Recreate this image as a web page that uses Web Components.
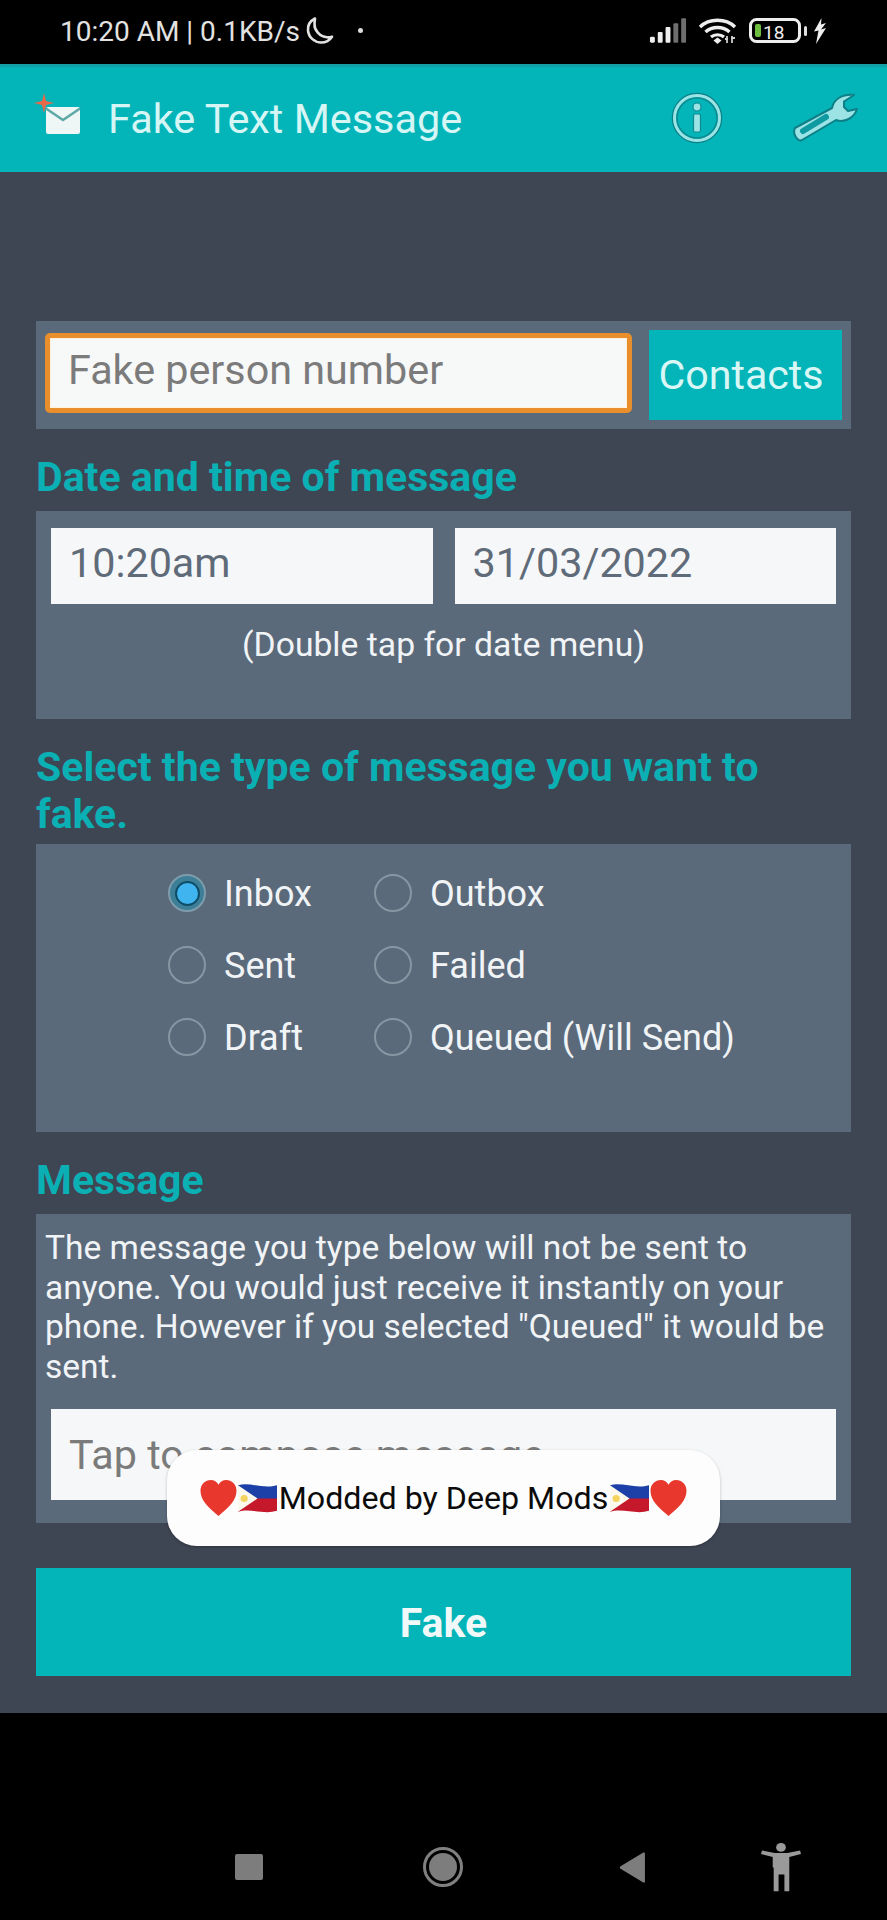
<!DOCTYPE html>
<html>
<head>
<meta charset="utf-8">
<style>
html,body{margin:0;padding:0;background:#000}
body{position:relative;width:887px;height:1920px;overflow:hidden;font-family:Roboto,"Liberation Sans",sans-serif}
</style>
</head>
<body>
<status-bar>10:20 AM | 0.1KB/s</status-bar>
<app-bar>Fake Text Message</app-bar>
<main-area>
  <contact-panel>
    <text-box focused placeholder>Fake person number</text-box>
    <teal-button>Contacts</teal-button>
  </contact-panel>
  <section-title>Date and time of message</section-title>
  <date-panel>
    <text-box slot="fields">10:20am</text-box>
    <text-box slot="fields">31/03/2022</text-box>
    (Double tap for date menu)
  </date-panel>
  <section-title style="--after:6px">Select the type of message you want to fake.</section-title>
  <type-panel>
    <radio-option checked>Inbox</radio-option>
    <radio-option>Outbox</radio-option>
    <radio-option>Sent</radio-option>
    <radio-option>Failed</radio-option>
    <radio-option>Draft</radio-option>
    <radio-option>Queued (Will Send)</radio-option>
  </type-panel>
  <section-title>Message</section-title>
  <compose-panel>
    The message you type below will not be sent to anyone. You would just receive it instantly on your phone. However if you selected "Queued" it would be sent.
    <text-box slot="field" tall placeholder>Tap to compose message</text-box>
  </compose-panel>
  <fake-button>Fake</fake-button>
</main-area>
<nav-bar></nav-bar>
<toast-note>Modded by Deep Mods</toast-note>
<script>
const define = (name, html) => {
  customElements.define(name, class extends HTMLElement {
    constructor() {
      super();
      this.attachShadow({ mode: "open" }).innerHTML = html;
    }
  });
};

const heart = `<svg width="37" height="37" viewBox="0 0 37 38"><path d="M18.500 37C8 28 0 21 0 11 0 4.500 5 0 10.500 0c3.500 0 6.500 2 8 5 1.500-3 4.500-5 8-5C32 0 37 4.500 37 11c0 10-8 17-18.500 26z" fill="#e8372c"/></svg>`;
const flag = `<svg class="flag" width="39" height="35" viewBox="0 0 38 32"><path d="M0 3c12-3 25 4 38 0v14H0z" fill="#1d3fa8"/><path d="M0 16h38v12c-13 4-26-3-38 1z" fill="#c5182b"/><path d="M0 3l19 13L0 29z" fill="#fbf8ee"/><circle cx="6" cy="16" r="3.500" fill="#f4d35e"/></svg>`;

define("status-bar", `
<style>
:host{display:flex;align-items:center;height:64px;padding:0 60px;box-sizing:border-box;background:#000;color:#e2e2e2;font-size:28px}
.text{white-space:nowrap;margin-top:-2px}
.moon{margin-left:3px;flex:none}
.dot{width:5px;height:5px;border-radius:50%;background:#ddd;margin-left:21px;flex:none;margin-top:-4px}
.right{margin-left:auto;display:flex;align-items:center;margin-top:-3px}
svg{display:block;flex:none}
</style>
<span class="text"><slot></slot></span>
<svg class="moon" width="34" height="32" viewBox="0 0 32 32" fill="none" style="margin-top:-3px"><path d="M11 3.500C6.200 6 3.500 10.500 4 15.500c.7 7 6.600 12 13.200 12 4.600 0 8.500-2.300 10.800-5.800-1.600.6-3.200.8-5 .6C15.500 21.500 10.200 15 10.500 9c.1-2 .2-3.700.5-5.500z" stroke="#e2e2e2" stroke-width="2.600" stroke-linejoin="round"/></svg>
<span class="dot"></span>
<span class="right">
  <svg width="39" height="26" viewBox="0 0 40 26" style="margin-right:10px">
    <rect x="1" y="19" width="5" height="6" rx="1.500" fill="#eee"/>
    <rect x="9" y="14" width="5" height="11" rx="1" fill="#eee"/>
    <rect x="17" y="9" width="5" height="16" rx="1" fill="#eee"/>
    <rect x="25" y="5" width="5" height="20" rx="1" fill="#6e6e6e"/>
    <rect x="33" y="0" width="5" height="25" rx="1" fill="#6e6e6e"/>
  </svg>
  <svg width="40" height="28" viewBox="0 0 40 28" fill="none" style="margin-right:11px">
    <path d="M2 10C11 1 28 1 37 10" stroke="#eee" stroke-width="3.400"/>
    <path d="M7.500 15C14 9 25 9 31.500 15" stroke="#eee" stroke-width="3.400"/>
    <path d="M13 20c3.500-3 9.500-3 13 0" stroke="#eee" stroke-width="3.200"/>
    <path d="M15.500 23.500l4-3 4 3-4 3.500z" fill="#eee"/>
    <path d="M29 19v7M27 22h3M34 19v7h0M33 21h4" stroke="#ccc" stroke-width="1.800"/>
  </svg>
  <svg width="58" height="26" viewBox="0 0 58 26" fill="none" style="margin-right:6px">
    <rect x="1.500" y="1.500" width="49" height="22" rx="6" stroke="#eee" stroke-width="3"/>
    <rect x="6" y="6" width="6" height="13" rx="2" fill="#6fbf3f"/>
    <rect x="55" y="8" width="3" height="10" rx="1.500" fill="#ddd"/>
    <text x="14" y="20.500" font-family="Roboto,sans-serif" font-size="19" fill="#eee">18</text>
  </svg>
  <svg width="14" height="26" viewBox="0 0 14 26"><path d="M8.500 0L1 13.500l4.500-1L3 26l10-16-5 1.500 5-6.500-5 1.500z" fill="#eee"/></svg>
</span>`);

define("app-bar", `
<style>
:host{display:flex;align-items:center;height:108px;background:#03b4b9;color:#d5f6f4;font-size:41.400px;box-shadow:inset 0 3px 0 #12a0a6}
.mail{margin-left:34px;margin-right:21px;flex:none;margin-top:-4px}
.title{margin-top:2px}
.info{margin-left:auto;flex:none}
.tool{margin-left:69px;margin-right:29px;flex:none}
</style>
<svg class="mail" width="53" height="46" viewBox="0 0 53 46">
  <path d="M10 0l2 8 8 2-8 2-2 8-2-8-8-2 8-2z" fill="#e8694a"/>
  <rect x="12" y="14" width="34" height="27" rx="2" fill="#eef6f6"/>
  <path d="M12 15.500L29 27l17-11.500" fill="none" stroke="#5ca9a6" stroke-width="2.500"/>
</svg>
<span class="title"><slot></slot></span>
<svg class="info" width="52" height="52" viewBox="0 0 52 52" fill="none">
  <circle cx="26" cy="26" r="24.500" stroke="#0e7f86" stroke-width="1.500"/>
  <circle cx="26" cy="26" r="22.500" stroke="#9be3e4" stroke-width="3"/>
  <circle cx="26" cy="26" r="20" stroke="#0e8a90" stroke-width="1.500"/>
  <rect x="22.500" y="22" width="7" height="18" rx="1.500" fill="#9be3e4" stroke="#0e8a90" stroke-width="1.200"/>
  <circle cx="26" cy="15" r="4" fill="#9be3e4" stroke="#0e8a90" stroke-width="1.200"/>
</svg>
<svg class="tool" width="66" height="50" viewBox="0 0 66 50" fill="none">
  <path d="M3 35L40 15C42 6 50 1 62 2L52 8.500 52 14 56 18 65 16C62 25 53 30 44 27L10 47C6 49 0 41 3 35z" fill="#9be3e4" stroke="#0e7f86" stroke-width="2" stroke-linejoin="round"/>
  <path d="M11 38L34 24" stroke="#0e9aa0" stroke-width="6" stroke-linecap="round"/>
</svg>`);

define("main-area", `
<style>
:host{display:flex;flex-direction:column;height:1541px;box-sizing:border-box;padding:149px 36px 36px;background:#3e4553}
</style>
<slot></slot>`);

define("contact-panel", `
<style>
:host{display:flex;align-items:flex-start;height:108px;box-sizing:border-box;padding:9px 9px 9px;background:#5b6a7b}
::slotted(text-box){width:587px;margin-right:17px;margin-top:3px}
</style>
<slot></slot>`);

define("date-panel", `
<style>
:host{display:block;height:208px;box-sizing:border-box;padding:17px 15px 0;background:#5b6a7b;color:#f1f4f6;font-size:33.700px;text-align:center}
.fields{display:grid;grid-template-columns:1fr 1fr;gap:22px;margin-bottom:20px}
.hint{line-height:42px}
</style>
<div class="fields"><slot name="fields"></slot></div>
<div class="hint"><slot></slot></div>`);

define("type-panel", `
<style>
:host{display:grid;grid-template-columns:206px 1fr;grid-auto-rows:72px;height:288px;box-sizing:border-box;padding:13px 0 0 132px;background:#5b6a7b}
</style>
<slot></slot>`);

define("compose-panel", `
<style>
:host{display:block;height:309px;box-sizing:border-box;padding:14px 15px 0;background:#5b6a7b;color:#f1f4f6;font-size:33.500px}
.note{line-height:39.700px;margin:0 0 22px -6px}
</style>
<div class="note"><slot></slot></div>
<slot name="field"></slot>`);

define("section-title", `
<style>
:host{display:block;box-sizing:border-box;padding:25px 0 var(--after,10px);color:#0bb0b4;font-weight:700;font-size:41px;line-height:47px}
</style>
<slot></slot>`);

define("text-box", `
<style>
:host{display:block;box-sizing:border-box;height:76px;background:#f6f7f8;color:#5f6b78;font-size:41.300px;line-height:71px;padding-left:18px;white-space:nowrap;overflow:hidden;text-align:left}
:host([placeholder]){color:#7b7b7b}
:host([focused]){height:80px;border:5px solid #e88e2c;border-radius:5px;padding-left:18px;line-height:64px;background:#f7f8f8;box-shadow:inset 0 0 0 1px #fff1dc}
:host([tall]){height:91px;line-height:92px}
</style>
<slot></slot>`);

define("teal-button", `
<style>
:host{display:block;width:193px;height:90px;flex:none;box-sizing:border-box;padding-right:9px;background:#03b4b9;color:#d8f7f5;font-size:41.200px;line-height:90px;text-align:center;white-space:nowrap}
</style>
<slot></slot>`);

define("radio-option", `
<style>
:host{display:flex;align-items:center;gap:18px;color:#f1f4f6;font-size:36px;white-space:nowrap}
.label{margin-top:2px}
.dot{width:38px;height:38px;box-sizing:border-box;border-radius:50%;border:2px solid #8896a3;flex:none;display:flex;align-items:center;justify-content:center}
:host([checked]) .dot{background:#3d7f96;border-color:#7e9cab}
:host([checked]) .dot::after{content:"";width:25px;height:25px;box-sizing:border-box;border-radius:50%;background:#3fb4ee;border:2px solid #0f4c68}
</style>
<span class="dot"></span><span class="label"><slot></slot></span>`);

define("fake-button", `
<style>
:host{display:block;margin-top:45px;height:108px;background:#03b4b9;color:#f0f8f8;font-size:41px;font-weight:700;line-height:111px;text-align:center}
</style>
<slot></slot>`);

define("nav-bar", `
<style>
:host{display:block;height:207px;box-sizing:border-box;padding:129px 0 0 235px;background:#000}
svg{display:block;flex:none}
.row{display:flex;align-items:center;height:50px}
</style>
<div class="row">
  <svg width="28" height="26" viewBox="0 0 28 26" style="margin-right:160px"><rect width="28" height="26" rx="2" fill="#7d7d7d"/></svg>
  <svg width="40" height="40" viewBox="0 0 40 40" fill="none" style="margin-right:156px"><circle cx="20" cy="20" r="18.500" stroke="#808080" stroke-width="3"/><circle cx="20" cy="20" r="14" fill="#7d7d7d"/></svg>
  <svg width="27" height="31" viewBox="0 0 26 36" preserveAspectRatio="none" style="margin-right:115px"><path d="M25 1.500v33c0 1-1 1.300-2 .7L1.500 19.500c-1-.8-1-2 0-3L23 1c1-.7 2-.5 2 .5z" fill="#7d7d7d"/></svg>
  <svg width="40" height="49" viewBox="0 0 41 56" preserveAspectRatio="none" fill="#9a9a9a"><circle cx="20.500" cy="5" r="5"/><path d="M0 12.500l1-4 13 3h13l13-3 1 4-12 3.500v12H29v27h-5V36h-6v19h-5V28h-1V16z"/></svg>
</div>`);

define("toast-note", `
<style>
:host{position:absolute;left:167px;top:1450px;width:553px;height:96px;display:flex;align-items:center;justify-content:center;background:#fdfdfd;border-radius:30px;color:#0b0b0b;font-size:32.200px;white-space:nowrap;box-shadow:0 1px 3px rgba(0,0,0,.25)}
svg{display:block;flex:none}
.flag{margin:0 1.500px}
</style>
${heart}${flag}<span><slot></slot></span>${flag}${heart}`);
</script>
</body>
</html>
